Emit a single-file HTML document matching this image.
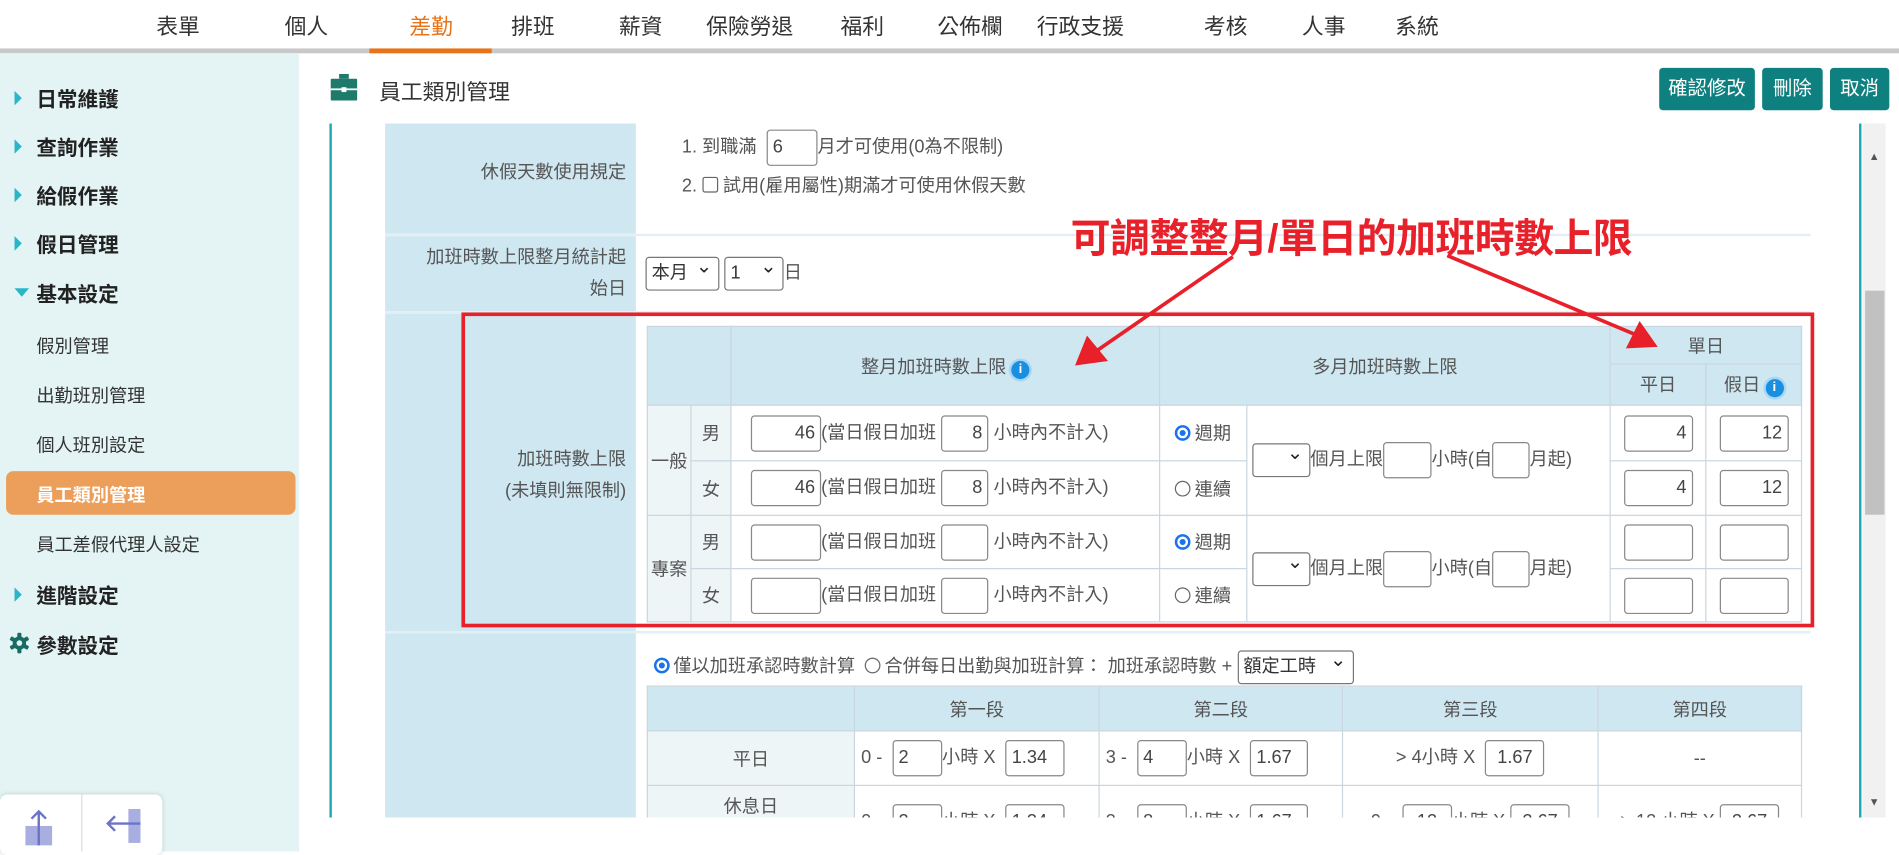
<!DOCTYPE html>
<html><head><meta charset="utf-8"><style>
*{box-sizing:border-box;margin:0;padding:0}
html,body{width:1899px;height:851px;overflow:hidden;background:#fff}
body{font-family:"Liberation Sans","Noto Sans CJK TC",sans-serif;color:#555}
#w{position:absolute;left:0;top:0;width:1568px;height:703px;transform:scale(1.2111);transform-origin:0 0}
.a{position:absolute}
.nav span{position:absolute;top:8px;font-size:18px;color:#333;transform:translateX(-50%);white-space:nowrap}
.side div{position:absolute;left:30px;font-size:17px;font-weight:bold;color:#222}
.side .s{font-size:15px;font-weight:normal;color:#333}
.side .tri{position:absolute;left:12px;width:0;height:0;border-top:6px solid transparent;border-bottom:6px solid transparent;border-left:6px solid #29b6c6}
.btn{position:absolute;top:56px;height:35px;background:#0f8080;color:#fff;font-size:16px;border-radius:3px;text-align:center;line-height:35px}
.lab{position:absolute;left:318px;width:207px;background:#cfe7f1;text-align:right;padding-right:8px;font-size:15px;color:#555;line-height:26px}
.sep{position:absolute;left:318px;width:1177px;height:2px;background:#e3eef5}
.in{display:inline-block;border:1px solid #888;border-radius:3px;background:#fff;height:30px;vertical-align:middle;font-size:15px;line-height:28px;padding:0 4px;color:#444}
.r{text-align:right}
table{border-collapse:collapse;table-layout:fixed;position:absolute;font-size:15px;color:#555}
td{border:1px solid #c9d6df;text-align:center;vertical-align:middle;white-space:nowrap;padding:0}
.h td{background:#cfe7f1}
.lt{background:#eef5f7}
.rad{display:inline-block;width:13px;height:13px;border-radius:50%;border:1px solid #666;vertical-align:-1px;margin-right:3px;background:#fff}
.rad.on{border:2px solid #1a73e8;box-shadow:inset 0 0 0 2px #fff;background:#1a73e8}
.sel{display:inline-block;border:1px solid #777;border-radius:3px;height:28px;vertical-align:middle;line-height:26px;padding:0 4px;font-size:15px;color:#333;position:relative;background:#fff}
.sel:after{content:"⌄";position:absolute;right:5px;top:-5px;font-size:16px;color:#222}
.info{display:inline-block;width:15px;height:15px;border-radius:50%;background:#1a8fe0;color:#fff;font-size:11px;line-height:15px;text-align:center;font-weight:bold;vertical-align:0;box-shadow:0 0 0 2px #a9d6f5}
.lf{text-align:left;padding-left:16px}
</style></head><body><div id="w">
<div class="nav">
<span style="left:147px">表單</span><span style="left:253px">個人</span><span style="left:356px;color:#e8741a">差勤</span><span style="left:440px">排班</span><span style="left:529px">薪資</span><span style="left:619px">保險勞退</span><span style="left:712px">福利</span><span style="left:801px">公佈欄</span><span style="left:892px">行政支援</span><span style="left:1012px">考核</span><span style="left:1093px">人事</span><span style="left:1170px">系統</span>
</div>
<div class="a" style="left:0;top:40px;width:1568px;height:4px;background:#c8c8c8"></div>
<div class="a" style="left:305px;top:40px;width:101px;height:4px;background:#e8741a"></div>
<div class="a side" style="left:0;top:44px;width:247px;height:659px;background:#e4f4f4">
<div class="tri" style="top:31px"></div><div style="top:24px">日常維護</div>
<div class="tri" style="top:71px"></div><div style="top:64px">查詢作業</div>
<div class="tri" style="top:111px"></div><div style="top:104px">給假作業</div>
<div class="tri" style="top:151px"></div><div style="top:144px">假日管理</div>
<div style="position:absolute;left:12px;top:194px;width:0;height:0;border-left:6px solid transparent;border-right:6px solid transparent;border-top:7px solid #29b6c6"></div><div style="top:185px">基本設定</div>
<div class="s" style="top:231px">假別管理</div>
<div class="s" style="top:272px">出勤班別管理</div>
<div class="s" style="top:313px">個人班別設定</div>
<div style="left:5px;top:345px;width:239px;height:36px;background:#ec9f5a;border-radius:6px"></div>
<div class="s" style="top:354px;color:#fff;font-weight:bold">員工類別管理</div>
<div class="s" style="top:395px">員工差假代理人設定</div>
<div class="tri" style="top:441px"></div><div style="top:434px">進階設定</div>
<svg style="position:absolute;left:7px;top:478px" width="18" height="18" viewBox="0 0 18 18"><g fill="#1a6b63"><circle cx="9" cy="9" r="5.5"/><rect x="7.3" y="0.5" width="3.4" height="17" rx="1"/><rect x="7.3" y="0.5" width="3.4" height="17" rx="1" transform="rotate(60 9 9)"/><rect x="7.3" y="0.5" width="3.4" height="17" rx="1" transform="rotate(120 9 9)"/></g><circle cx="9" cy="9" r="2.3" fill="#e4f4f4"/></svg><div style="top:475px">參數設定</div>
</div>
<div class="a" style="left:0;top:656px;width:134px;height:50px;background:#fff;border-radius:6px;box-shadow:0 0 4px rgba(0,0,0,.15)"></div>
<div class="a" style="left:67px;top:656px;width:1px;height:47px;background:#ddd"></div>
<svg class="a" style="left:20px;top:668px" width="24" height="32"><rect x="1" y="14" width="22" height="16" fill="#a9aee0"/><path d="M12 30V2M6 8l6-6 6 6" stroke="#6c74c8" stroke-width="2" fill="none"/></svg>
<svg class="a" style="left:86px;top:666px" width="32" height="32"><rect x="20" y="2" width="10" height="28" fill="#a9aee0"/><path d="M30 14H3M9 8l-6 6 6 6" stroke="#6c74c8" stroke-width="2" fill="none"/></svg>
<svg class="a" style="left:273px;top:61px" width="22" height="22"><rect x="7" y="0" width="8" height="4" fill="#1e7a6a"/><rect x="0" y="4" width="22" height="18" rx="1" fill="#1e7a6a"/><rect x="0" y="12" width="22" height="1.5" fill="#fff"/><rect x="9" y="11" width="4" height="4" fill="#fff"/></svg>
<div class="a" style="left:313px;top:62px;font-size:18px;color:#333">員工類別管理</div>
<div class="btn" style="left:1370px;width:79px">確認修改</div>
<div class="btn" style="left:1455px;width:50px">刪除</div>
<div class="btn" style="left:1511px;width:49px">取消</div>
<div class="a" style="left:272px;top:102px;width:2px;height:573px;background:#1aa9b5"></div>
<div class="a" style="left:1535px;top:102px;width:2px;height:573px;background:#1aa9b5"></div>
<div class="a" style="left:1538px;top:102px;width:19px;height:573px;background:#f1f1f1"></div>
<div class="a" style="left:1540px;top:240px;width:16px;height:185px;background:#c1c1c1"></div>
<div class="a" style="left:1543px;top:124px;font-size:9px;color:#555">▲</div>
<div class="a" style="left:1543px;top:657px;font-size:9px;color:#555">▼</div>
<div class="a" style="left:274px;top:102px;width:1261px;height:573px;overflow:hidden">
<div class="a" style="left:-274px;top:-102px;width:1568px;height:703px">
<div class="lab" style="top:102px;height:91px;padding-top:28px">休假天數使用規定</div>
<div class="a" style="left:563px;top:107px;font-size:15px;line-height:30px">1. 到職滿 &nbsp;<span class="in" style="width:42px">6</span>月才可使用(0為不限制)</div>
<div class="a" style="left:563px;top:142px;font-size:15px">2. <span style="display:inline-block;width:13px;height:13px;border:1px solid #666;border-radius:2px;vertical-align:-1px"></span> 試用(雇用屬性)期滿才可使用休假天數</div>
<div class="sep" style="top:193px"></div>
<div class="lab" style="top:195px;height:62px;padding-top:5px">加班時數上限整月統計起<br>始日</div>
<div class="a" style="left:533px;top:212px;font-size:15px"><span class="sel" style="width:61px">本月</span> <span class="sel" style="width:49px">1</span>日</div>
<div class="sep" style="top:257px"></div>
<div class="lab" style="top:259px;height:262px;padding-top:108px">加班時數上限<br>(未填則無限制)</div>
<table style="left:534px;top:269px;width:953px">
<colgroup><col style="width:36px"><col style="width:33px"><col style="width:354px"><col style="width:72px"><col style="width:300px"><col style="width:79px"><col style="width:79px"></colgroup>
<tr class="h" style="height:31px"><td colspan="2" rowspan="2"></td><td rowspan="2">整月加班時數上限 <span class="info">i</span></td><td colspan="2" rowspan="2">多月加班時數上限</td><td colspan="2">單日</td></tr>
<tr class="h" style="height:34px"><td>平日</td><td>假日 <span class="info">i</span></td></tr>
<tr style="height:46px"><td class="lt" rowspan="2">一般</td><td class="lt">男</td><td class="lf"><span class="in r" style="width:58px">46</span>(當日假日加班 <span class="in r" style="width:39px">8</span> 小時內不計入)</td><td><span class="rad on"></span>週期</td><td rowspan="2" style="text-align:left;padding-left:4px"><span class="sel" style="width:48px"></span>個月上限<span class="in" style="width:40px"></span>小時(自<span class="in" style="width:31px"></span>月起)</td><td><span class="in r" style="width:57px">4</span></td><td><span class="in r" style="width:57px">12</span></td></tr>
<tr style="height:45px"><td class="lt">女</td><td class="lf"><span class="in r" style="width:58px">46</span>(當日假日加班 <span class="in r" style="width:39px">8</span> 小時內不計入)</td><td><span class="rad"></span>連續</td><td><span class="in r" style="width:57px">4</span></td><td><span class="in r" style="width:57px">12</span></td></tr>
<tr style="height:44px"><td class="lt" rowspan="2">專案</td><td class="lt">男</td><td class="lf"><span class="in r" style="width:58px"></span>(當日假日加班 <span class="in r" style="width:39px"></span> 小時內不計入)</td><td><span class="rad on"></span>週期</td><td rowspan="2" style="text-align:left;padding-left:4px"><span class="sel" style="width:48px"></span>個月上限<span class="in" style="width:40px"></span>小時(自<span class="in" style="width:31px"></span>月起)</td><td><span class="in r" style="width:57px"></span></td><td><span class="in r" style="width:57px"></span></td></tr>
<tr style="height:44px"><td class="lt">女</td><td class="lf"><span class="in r" style="width:58px"></span>(當日假日加班 <span class="in r" style="width:39px"></span> 小時內不計入)</td><td><span class="rad"></span>連續</td><td><span class="in r" style="width:57px"></span></td><td><span class="in r" style="width:57px"></span></td></tr>
</table>
<div class="sep" style="top:521px"></div>
<div class="lab" style="top:523px;height:160px"></div>
<div class="a" style="left:540px;top:537px;font-size:15px;line-height:24px;white-space:nowrap"><span class="rad on"></span>僅以加班承認時數計算 &nbsp;<span class="rad"></span>合併每日出勤與加班計算： 加班承認時數 + <span class="sel" style="width:96px">額定工時</span></div>
<table style="left:534px;top:566px;width:953px">
<colgroup><col style="width:171px"><col style="width:202px"><col style="width:201px"><col style="width:211px"><col style="width:168px"></colgroup>
<tr class="h" style="height:37px"><td></td><td>第一段</td><td>第二段</td><td>第三段</td><td>第四段</td></tr>
<tr style="height:45px"><td class="lt">平日</td><td style="text-align:left;padding-left:5px">0 - &nbsp;<span class="in" style="width:41px">2</span>小時 X &nbsp;<span class="in" style="width:49px">1.34</span></td><td style="text-align:left;padding-left:5px">3 - &nbsp;<span class="in" style="width:41px">4</span>小時 X &nbsp;<span class="in" style="width:48px">1.67</span></td><td>&gt; 4小時 X &nbsp;<span class="in" style="width:49px">1.67</span></td><td>--</td></tr>
<tr style="height:60px"><td class="lt" style="vertical-align:top;padding-top:6px">休息日</td><td style="text-align:left;padding-left:5px">0 - &nbsp;<span class="in" style="width:41px">2</span>小時 X &nbsp;<span class="in" style="width:49px">1.34</span></td><td style="text-align:left;padding-left:5px">3 - &nbsp;<span class="in" style="width:41px">8</span>小時 X &nbsp;<span class="in" style="width:48px">1.67</span></td><td>9 - &nbsp;<span class="in" style="width:41px">12</span>小時 X <span class="in" style="width:49px">2.67</span></td><td>&gt; 12 小時 X <span class="in" style="width:49px">2.67</span></td></tr>
</table>
</div></div>
<div class="a" style="left:381px;top:258px;width:1117px;height:260px;border:3px solid #e8202a"></div>
<div class="a" style="left:884px;top:170px;font-size:33px;font-weight:bold;color:#e8202a;white-space:nowrap;letter-spacing:-0.5px">可調整整月/單日的加班時數上限</div>
<svg class="a" style="left:0;top:0" width="1568" height="703"><g stroke="#e8202a" stroke-width="3" fill="#e8202a"><line x1="1018" y1="212" x2="905" y2="290"/><polygon points="890,300 898,280 912,297"/><line x1="1195" y1="211" x2="1352" y2="277"/><polygon points="1366,285 1345,286 1354,268"/></g></svg>
</div></body></html>
